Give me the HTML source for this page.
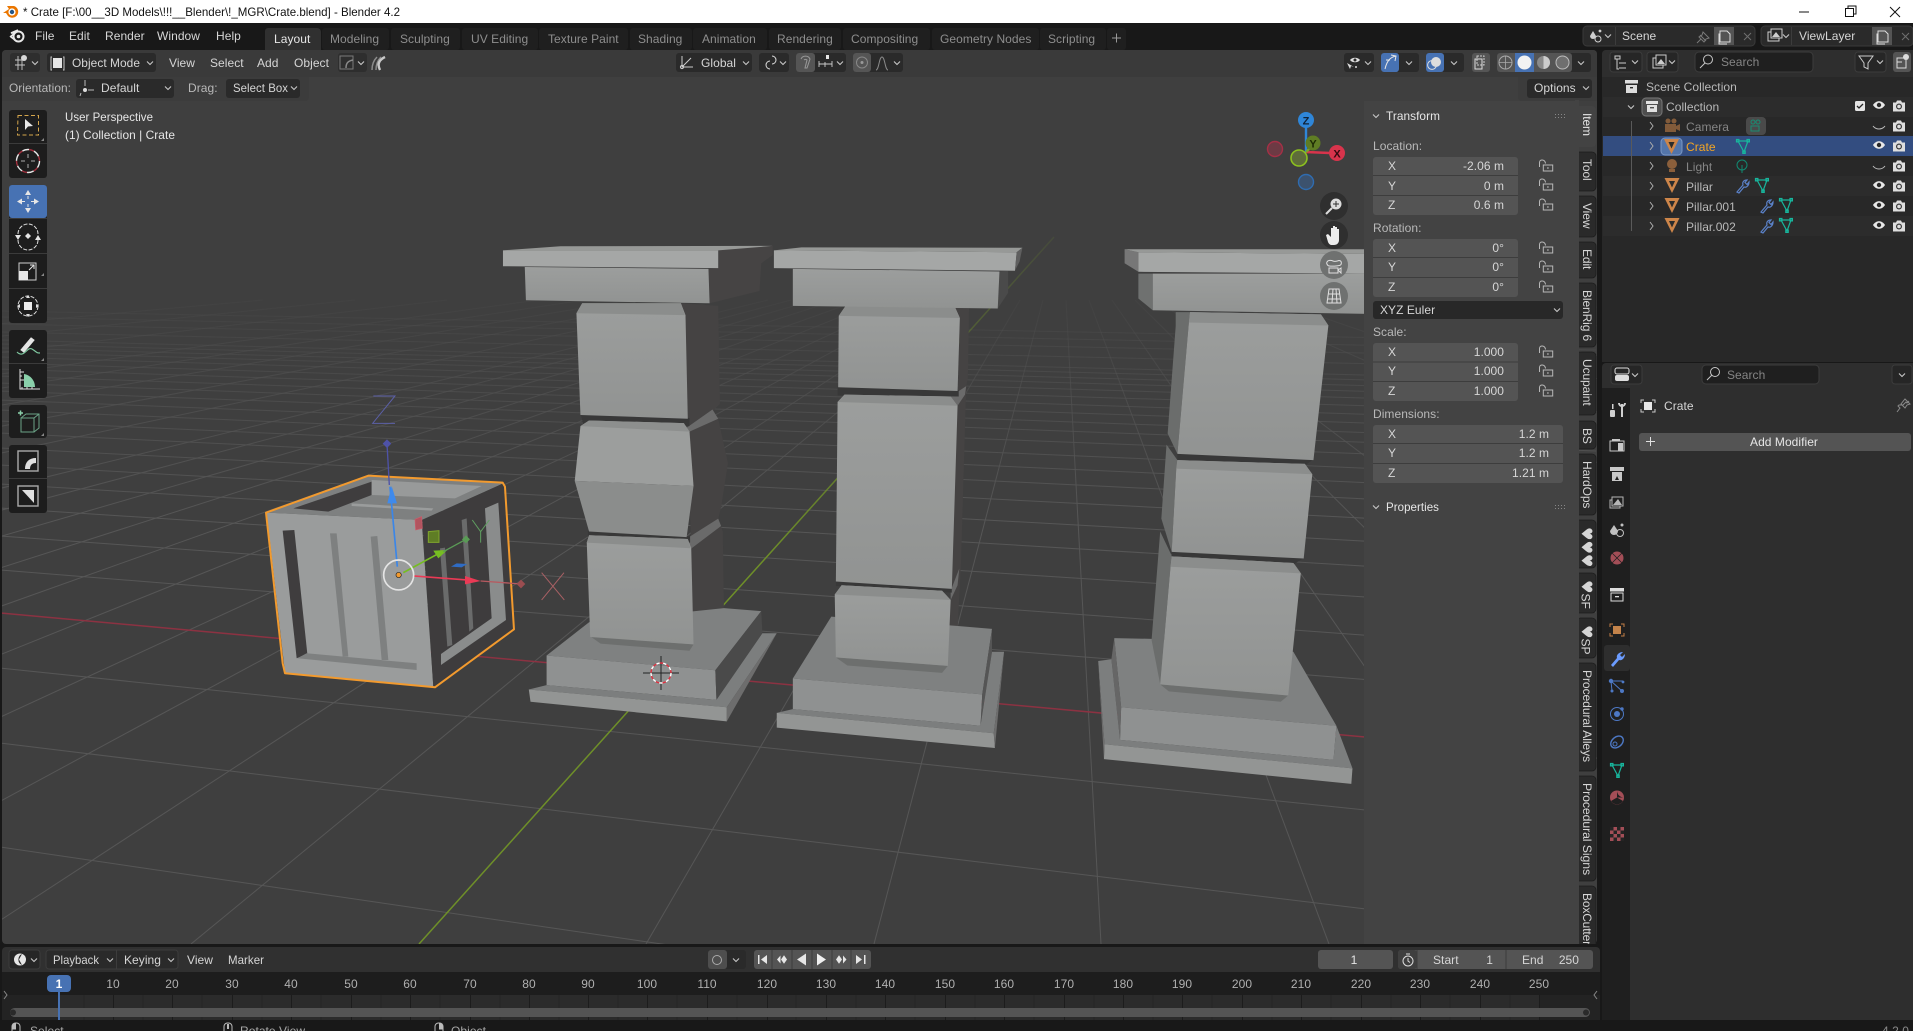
<!DOCTYPE html>
<html><head><meta charset="utf-8"><title>Blender</title>
<style>
html,body{margin:0;padding:0;background:#181818;width:1913px;height:1031px;overflow:hidden}
svg{display:block}
text{font-family:"Liberation Sans","DejaVu Sans",sans-serif;font-size:12px;fill:#d6d6d6;letter-spacing:.05px}
.t{fill:#8e8e8e}.h{fill:#b9b9b9}.dim{fill:#858585}.w{fill:#e6e6e6}
.r{text-anchor:end}.c{text-anchor:middle}
.f{fill:#545454}.dd{fill:#282828}.ln{fill:none;stroke:#cfcfcf;stroke-width:1}
.g{fill:#1d1d1d}
.v{letter-spacing:-.1px}
.hrt{font-size:15px;letter-spacing:0;font-family:"DejaVu Sans",sans-serif}
</style></head><body>
<svg xmlns="http://www.w3.org/2000/svg" width="1913" height="1031" viewBox="0 0 1913 1031">
<defs>
<linearGradient id="gf" gradientUnits="userSpaceOnUse" x1="0" y1="270" x2="0" y2="520"><stop offset="0" stop-color="#505050" stop-opacity="0"/><stop offset=".5" stop-color="#505050" stop-opacity=".75"/><stop offset="1" stop-color="#565656"/></linearGradient>
<linearGradient id="ga" gradientUnits="userSpaceOnUse" x1="0" y1="240" x2="0" y2="560"><stop offset="0" stop-color="#6e8f28" stop-opacity=".15"/><stop offset="1" stop-color="#6e8f28"/></linearGradient>
<linearGradient id="st" x1="0" y1="0" x2="0" y2="1"><stop offset="0" stop-color="#9c9e9d"/><stop offset="1" stop-color="#919392"/></linearGradient>
<g id="chev"><polyline points="-3,-1.5 0,1.5 3,-1.5" fill="none" stroke="#c8c8c8" stroke-width="1.1"/></g>
<g id="lock"><path d="M-6.500 2V-2.500C-6.500-6-1-6-.5-1.500" fill="none" stroke="#b8b8b8"/><rect x="-2.700" y="0" width="9.400" height="6" fill="none" stroke="#b8b8b8"/><rect x="1.200" y="2.300" width="1.400" height="1.400" fill="#b8b8b8"/></g>
<g id="eye"><path d="M-6 0C-3-5 3-5 6 0C3 5-3 5-6 0Z" fill="#e8e8e8"/><circle r="2.2" fill="#2a2a2a"/></g>
<g id="eyeh"><path d="M-6-1C-3 3 3 3 6-1" fill="none" stroke="#bdbdbd"/></g>
<g id="cam"><path d="M-6-3.5h3l1-2h4l1 2h3v9h-12z" fill="#dedede"/><circle cy=".5" r="3" fill="#3a3a3a"/><circle cy=".5" r="1.8" fill="#dedede"/></g>
<g id="obj"><path d="M-7.500-7H7.500L0 8Z" fill="#cd8549"/><path d="M-3-4H3L0 2.500Z" fill="#2b2b2b"/></g>
<g id="mesh" fill="none" stroke-width="1.2"><path d="M-5-5H5L1 6Z"/><rect x="-6.5" y="-6.5" width="2.4" height="2.4"/><rect x="4" y="-6.5" width="2.4" height="2.4"/><rect x="-.2" y="5" width="2.4" height="2.4"/></g>
<g id="wr"><path d="M-5 6L1-1C0-4 2-6 5-6L3-3.5 5-1.5 7-4C7-1 5 2 2 1L-3 7Z" fill="none" stroke="#5b82c9" stroke-width="1.2"/></g>
<g id="dots" fill="#888"><rect width="1" height="1" x="0" y="0"/><rect width="1" height="1" x="3" y="0"/><rect width="1" height="1" x="6" y="0"/><rect width="1" height="1" x="9" y="0"/><rect width="1" height="1" x="0" y="3"/><rect width="1" height="1" x="3" y="3"/><rect width="1" height="1" x="6" y="3"/><rect width="1" height="1" x="9" y="3"/></g>
<clipPath id="vp"><rect x="2" y="50" width="1595" height="894" rx="4"/></clipPath>
<clipPath id="bot"><rect x="0" y="1020" width="1913" height="11"/></clipPath>
<clipPath id="tabs"><rect x="1575" y="100" width="24" height="844"/></clipPath>
</defs>

<!-- title bar -->
<rect width="1913" height="23" fill="#fff"/>
<g transform="translate(11,12)"><path d="M-8 1L-2-3L-4-6L3-6A6 6 0 1 1-3 4L-5 1Z" fill="#ea7600"/><circle cx="1" cy="0" r="3.6" fill="#fff"/><circle cx="1" cy="0" r="2.2" fill="#265787"/></g>
<text x="23" y="16" textLength="377" lengthAdjust="spacingAndGlyphs" style="fill:#111;letter-spacing:0">* Crate [F:\00__3D Models\!!!__Blender\!_MGR\Crate.blend] - Blender 4.2</text>
<rect x="1799" y="11.5" width="10" height="1" fill="#111"/>
<rect x="1845.5" y="8.5" width="8" height="8" fill="none" stroke="#111"/><path d="M1848 8V6h8v8h-2" fill="none" stroke="#111"/>
<path d="M1890 7l10 10M1900 7l-10 10" stroke="#111" fill="none"/>

<!-- top bar -->
<rect y="23" width="1913" height="1008" fill="#181818"/>
<g transform="translate(17,36)"><circle cx="1.5" cy=".5" r="5" fill="none" stroke="#e8e8e8" stroke-width="2"/><circle cx="1.5" cy=".5" r="1.8" fill="#e8e8e8"/><path d="M-7 1L-2-3H-6L1-6M-2 4L-6 1" fill="none" stroke="#e8e8e8" stroke-width="1.6"/></g>
<text x="35" y="40">File</text><text x="69" y="40">Edit</text><text x="105" y="40">Render</text><text x="157" y="40">Window</text><text x="216" y="40">Help</text>
<path d="M268 28h49a4 4 0 0 1 4 4v18h-56v-19a3 3 0 0 1 3-3z" fill="#303030"/>
<g fill="#1f1f1f"><rect x="322" y="28" width="67" height="22" rx="3"/><rect x="391" y="28" width="69" height="22" rx="3"/><rect x="462" y="28" width="76" height="22" rx="3"/><rect x="539" y="28" width="89" height="22" rx="3"/><rect x="630" y="28" width="62" height="22" rx="3"/><rect x="693" y="28" width="74" height="22" rx="3"/><rect x="769" y="28" width="72" height="22" rx="3"/><rect x="843" y="28" width="87" height="22" rx="3"/><rect x="932" y="28" width="107" height="22" rx="3"/><rect x="1040" y="28" width="66" height="22" rx="3"/><rect x="1107" y="28" width="19" height="22" rx="3"/></g>
<text x="274" y="43" class="w">Layout</text><text x="330" y="43" class="t">Modeling</text><text x="400" y="43" class="t">Sculpting</text><text x="471" y="43" class="t">UV Editing</text><text x="548" y="43" class="t">Texture Paint</text><text x="638" y="43" class="t">Shading</text><text x="702" y="43" class="t">Animation</text><text x="777" y="43" class="t">Rendering</text><text x="851" y="43" class="t">Compositing</text><text x="940" y="43" class="t">Geometry Nodes</text><text x="1048" y="43" class="t">Scripting</text>
<path d="M1112 38h9M1116.5 33.5v9" stroke="#9a9a9a" fill="none"/>

<!-- scene / viewlayer -->
<rect x="1583" y="26" width="172" height="20" rx="4" fill="#2a2a2a" stroke="#3a3a3a"/>
<rect x="1615" y="27" width="1" height="18" fill="#3c3c3c"/>
<path d="M1593 31l3 5a3 3 0 1 1-6 0z" fill="#cfcfcf"/><circle cx="1598" cy="39" r="3" fill="none" stroke="#cfcfcf"/><circle cx="1600" cy="31" r="1.4" fill="#cfcfcf"/><use href="#chev" x="1608" y="36"/>
<text x="1622" y="40">Scene</text>
<path d="M1697 43l4-4M1700 35l6 6M1703 32l6 6-3 1-2 3-5-5 3-2z" fill="none" stroke="#7a7a7a"/>
<rect x="1714" y="27" width="20" height="18" fill="#545454"/><path d="M1720 31h7l3 3v8h-10zM1720 34h-1v10h8" fill="none" stroke="#ddd"/>
<path d="M1744 33l7 7M1751 33l-7 7" stroke="#6f6f6f"/>
<rect x="1761" y="26" width="152" height="20" rx="4" fill="#2a2a2a" stroke="#3a3a3a"/>
<rect x="1791" y="27" width="1" height="18" fill="#3c3c3c"/>
<rect x="1768" y="32" width="11" height="9" fill="none" stroke="#cfcfcf"/><rect x="1771" y="29" width="11" height="9" fill="#2a2a2a" stroke="#cfcfcf"/><path d="M1772 37l4-5 4 5z" fill="#cfcfcf"/><use href="#chev" x="1786" y="36"/>
<text x="1799" y="40">ViewLayer</text>
<rect x="1872" y="27" width="20" height="18" fill="#545454"/><path d="M1878 31h7l3 3v8h-10zM1878 34h-1v10h8" fill="none" stroke="#ddd"/>
<path d="M1902 33l7 7M1909 33l-7 7" stroke="#6f6f6f"/>

<!-- VIEWPORT -->
<rect x="2" y="50" width="1595" height="894" rx="4" fill="#3f3f3f"/>
<g clip-path="url(#vp)">
<g stroke="url(#gf)" stroke-width="1" fill="none">
<path d="M0 847L1596 1081M0 743L1596 937M0 668L1596 834M0 570L1596 698M0 536L1596 652M0 508L1596 612M0 484L1596 580M0 465L1596 554M0 448L1596 530M0 433L1596 510M0 421L1596 493M0 410L1596 478M0 400L1596 463M0 391L1596 451M0 383L1596 441M0 376L1596 431M0 369L1596 422M0 363L1596 413M0 357L1596 405M0 352L1596 398M0 348L1596 392M0 344L1596 386M0 340L1596 381M0 332L1596 369M0 324L1596 358M0 317L1596 350M0 311L1596 342"/>
<path d="M191 944L974 300M-36 944L951 300M-264 944L928 300M-492 944L905 300M-719 944L882 300M-947 944L860 300M-1174 944L837 300M-1402 944L814 300M-1629 944L791 300M-1857 944L768 300M-2312 944L722 300M-2767 944L676 300M-3222 944L630 300M-3677 944L584 300M-4132 944L538 300M-5042 944L447 300M-5953 944L355 300M-6863 944L263 300"/>
<path d="M646 944L1020 300M874 944L1043 300M1101 944L1066 300M1329 944L1089 300M1556 944L1112 300M1784 944L1135 300M2012 944L1158 300M2694 944L1227 300M3149 944L1272 300M3604 944L1318 300M4060 944L1364 300M4515 944L1410 300M4970 944L1456 300M5880 944L1548 300"/>
</g>
<path d="M0 613L1596 758" stroke="#8c3242" stroke-width="1.5" fill="none"/>
<path d="M419 944L1054 237" stroke="url(#ga)" stroke-width="1.5" fill="none"/>

<!-- PILLARS -->
<g transform="translate(480 230) scale(.574 .37)">
<!-- pillar 1 -->
<polygon points="415,55 510,43 510,68 490,90 487,165 400,198 398,105 415,103" fill="#464444"/>
<polygon points="350,198 415,205 418,470 405,490 415,510 432,630 420,750 415,780 423,815 425,1030 372,1125 362,512 357,230" fill="#454343"/>
<polygon points="355,540 405,485 415,510 365,545" fill="#6b6b6b"/><polygon points="362,832 415,780 420,800 367,862" fill="#6a6a6a"/>
<polygon points="116,1150 190,1060 425,1022 490,1030 410,1190" fill="#7f8181"/>
<polygon points="116,1150 410,1190 412,1270 116,1230" fill="#8f9191"/>
<polygon points="410,1190 490,1030 492,1090 412,1270" fill="#4a4a4a"/>
<polygon points="85,1242 116,1230 412,1270 492,1090 517,1090 430,1290" fill="#7c7e7e"/>
<polygon points="85,1242 430,1290 430,1328 88,1275" fill="#939594"/>
<polygon points="430,1290 517,1090 430,1328" fill="#6d6d6d"/>
<polygon points="192,1098 372,1120 365,1137 210,1118" fill="#6d6f6e"/>
<polygon points="175,495 365,508 365,530 180,525" fill="#383838"/><polygon points="188,812 366,828 366,845 188,830" fill="#383838"/>
<polygon points="178,198 350,198 358,230 362,510 175,500 168,225" fill="url(#st)"/><polygon points="178,198 350,198 357,230 168,225" fill="#8b8d8c"/>
<polygon points="190,515 355,522 365,545 372,692 165,678 175,530" fill="#9c9e9d"/><polygon points="165,678 372,692 360,830 190,815" fill="#8b8d8c"/><polygon points="190,515 355,522 365,545 175,530" fill="#8d8f8e"/>
<polygon points="190,825 362,835 368,860 372,1120 192,1100 186,845" fill="url(#st)"/><polygon points="190,825 362,835 367,860 186,845" fill="#8b8d8c"/>
<polygon points="78,100 398,105 400,198 80,190" fill="url(#st)"/>
<polygon points="40,55 415,55 415,103 40,98" fill="#a5a7a6"/><polygon points="40,55 140,44 510,43 415,55" fill="#979997"/>
<!-- pillar 2 -->
<polygon points="905,112 920,110 920,170 902,212" fill="#4a4a4a"/>
<polygon points="828,210 852,212 850,400 847,422 838,900 832,1080 815,1178 832,475 836,238" fill="#454343"/>
<polygon points="820,450 847,422 845,445 832,475" fill="#6b6b6b"/><polygon points="820,975 835,915 832,960 820,1000" fill="#6b6b6b"/>
<polygon points="545,1212 612,1045 830,1070 892,1078 875,1255" fill="#7f8181"/>
<polygon points="545,1212 875,1255 872,1340 545,1295" fill="#8f9191"/>
<polygon points="875,1255 892,1078 892,1140 872,1340" fill="#555"/>
<polygon points="517,1305 545,1295 872,1340 892,1140 913,1140 895,1360" fill="#7c7e7e"/>
<polygon points="517,1305 895,1360 897,1400 517,1345" fill="#939594"/>
<polygon points="895,1360 913,1140 897,1400" fill="#6d6d6d"/>
<polygon points="620,1155 815,1178 805,1197 640,1177" fill="#6d6f6e"/>
<polygon points="623,423 834,433 834,450 623,447" fill="#383838"/><polygon points="620,948 822,968 822,980 620,962" fill="#383838"/>
<polygon points="637,205 828,210 836,238 832,435 624,425 625,232" fill="url(#st)"/><polygon points="637,205 828,210 836,238 625,232" fill="#8b8d8c"/>
<polygon points="635,445 820,450 832,475 822,970 620,950 623,465" fill="url(#st)"/><polygon points="635,445 820,450 832,475 623,465" fill="#8b8d8c"/>
<polygon points="630,960 805,975 820,1000 815,1178 620,1155 618,985" fill="url(#st)"/><polygon points="630,960 805,975 820,1000 618,985" fill="#8b8d8c"/>
<polygon points="545,105 905,112 902,212 545,205" fill="url(#st)"/>
<polygon points="512,55 935,60 932,110 512,103" fill="#a5a7a6"/><polygon points="512,55 560,47 945,48 935,60" fill="#979997"/><polygon points="935,60 945,48 940,85 932,110" fill="#5f5f5f"/>
<!-- pillar 3 -->
<polygon points="1105,1103 1170,1105 1417,1140 1492,1340 1117,1290" fill="#7f8181"/>
<polygon points="1117,1290 1492,1340 1487,1432 1115,1378" fill="#8f9191"/>
<polygon points="1105,1103 1117,1290 1115,1378 1100,1160" fill="#666"/>
<polygon points="1077,1165 1100,1160 1115,1378 1487,1432 1492,1340 1520,1455 1088,1390" fill="#7c7e7e"/>
<polygon points="1088,1390 1520,1455 1518,1497 1087,1430" fill="#939594"/>
<polygon points="1077,1165 1088,1390 1087,1430" fill="#6d6d6d"/>
<polygon points="1185,1228 1408,1258 1395,1275 1200,1247" fill="#6d6f6e"/>
<polygon points="1212,222 1237,222 1235,250 1215,605 1198,550 1212,260" fill="#6b6d6c"/>
<polygon points="1196,580 1215,622 1213,645 1205,870 1187,780" fill="#6b6d6c"/>
<polygon points="1185,815 1205,880 1203,910 1185,1228 1170,1108" fill="#6b6d6c"/>
<polygon points="1215,603 1452,620 1437,636 1215,622" fill="#383838"/><polygon points="1205,868 1435,886 1417,904 1205,884" fill="#383838"/>
<polygon points="1237,222 1465,228 1478,258 1452,622 1215,605 1235,250" fill="url(#st)"/><polygon points="1237,222 1465,228 1478,258 1235,250" fill="#8b8d8c"/>
<polygon points="1215,622 1437,632 1450,660 1435,888 1205,870 1213,645" fill="url(#st)"/><polygon points="1215,622 1437,632 1450,660 1213,645" fill="#8b8d8c"/>
<polygon points="1205,882 1417,900 1430,928 1408,1258 1185,1228 1203,910" fill="url(#st)"/><polygon points="1205,882 1417,900 1430,928 1203,910" fill="#8b8d8c"/>
<polygon points="1147,118 1172,118 1172,217 1147,185" fill="#6f7170"/>
<polygon points="1172,118 1560,118 1560,227 1172,217" fill="url(#st)"/>
<polygon points="1123,52 1147,60 1147,113 1123,90" fill="#777"/>
<polygon points="1147,60 1560,65 1560,118 1147,113" fill="#a5a7a6"/><polygon points="1123,52 1560,52 1560,65 1147,60" fill="#979997"/>
</g>

<!-- 3D cursor -->
<g transform="translate(661,673)" fill="none"><path d="M0-17V17M-18 0H18" stroke="#222" stroke-width="1"/><circle r="10" stroke="#fff" stroke-width="1.4" stroke-dasharray="3.5 3.5"/><circle r="10" stroke="#e03040" stroke-width="1.4" stroke-dasharray="3.5 3.5" stroke-dashoffset="3.5"/></g>

<!-- CRATE -->
<g transform="translate(240 380) scale(.3333)">
<polygon points="80,398 385,287 790,310 545,420" fill="#7e8080"/>
<polygon points="160,385 395,305 395,345 265,395" fill="#3f3d3e"/>
<polygon points="395,300 725,318 645,355 395,345" fill="#989a9a"/>
<polygon points="335,370 580,385 575,392 335,378" fill="#9a9c9c"/>
<polygon points="80,398 545,420 580,920 135,878" fill="#9a9c9c"/>
<polygon points="548,420 790,310 822,748 580,920" fill="#3e3c3d"/>
<polygon points="735,385 775,368 798,720 603,855 603,822 755,715" fill="#8a8c8c"/>
<polygon points="600,505 615,503 637,795 622,800" fill="#6a6b6b"/><polygon points="665,420 680,415 700,745 688,755" fill="#6a6b6b"/>
<polygon points="128,452 163,450 202,822 170,835" fill="#3f3d3e"/>
<polygon points="270,460 290,460 325,830 308,830" fill="#7e8080"/><polygon points="392,470 412,468 445,840 425,840" fill="#7e8080"/>
<polygon points="200,820 530,850 530,870 172,835" fill="#7e8080"/>
<path d="M78 398L385 287L788 308L795 320L822 748L585 922L135 880L128 850Z" fill="none" stroke="#f29a2e" stroke-width="6" stroke-linejoin="round"/>
<!-- gizmo -->
<path d="M472 560L450 320" stroke="#3b86e8" stroke-width="5" fill="none"/><path d="M448 315L441 190" stroke="#4e52a8" stroke-width="4" fill="none"/>
<polygon points="442,370 471,370 455,318" fill="#3f8aec"/><polygon points="441,178 454,191 441,204 428,191" fill="#4e52a8"/>
<path d="M400 48H465L398 130H465" stroke="#5c60a8" stroke-width="3" fill="none"/>
<path d="M490 578L597 520" stroke="#76bd22" stroke-width="5" fill="none"/><polygon points="580,512 622,510 595,535" fill="#76bd22"/><path d="M610 515L678 478" stroke="#5a9b56" stroke-width="4" fill="none"/><polygon points="678,466 690,478 678,490 666,478" fill="#5a9b56"/>
<path d="M697 420L722 455L748 420M722 455V488" stroke="#5f9f60" stroke-width="3" fill="none"/>
<path d="M520 588L680 600" stroke="#ea3a55" stroke-width="5" fill="none"/><polygon points="675,588 722,603 675,613" fill="#ea3a55"/><path d="M722 603L843 612" stroke="#b75a60" stroke-width="4" fill="none"/><polygon points="843,599 856,612 843,625 830,612" fill="#9b4d50"/>
<path d="M905 578L973 660M972 578L905 660" stroke="#a86064" stroke-width="3" fill="none"/>
<polygon points="525,418 545,410 547,445 527,450" fill="#b2545f" stroke="#c95c6b" stroke-width="2"/>
<polygon points="565,455 597,452 597,487 565,487" fill="#5f7d25" stroke="#80a62d" stroke-width="3"/>
<polygon points="633,560 650,550 682,552 665,562" fill="#2f6cc4"/>
<circle cx="476" cy="585" r="45" fill="none" stroke="#e4e4e4" stroke-width="5"/><circle cx="476" cy="585" r="8" fill="#f29a2e" stroke="#222" stroke-width="2"/>
</g>

<!-- overlay text -->
<text x="65" y="121" class="w" textLength="88" lengthAdjust="spacingAndGlyphs">User Perspective</text><text x="65" y="139" class="w" textLength="110" lengthAdjust="spacingAndGlyphs">(1) Collection | Crate</text>

<!-- viewport gizmo -->
<path d="M1306 153V125" stroke="#2f86d8" stroke-width="2.4"/><path d="M1306 152L1330 153" stroke="#d8344c" stroke-width="2.4"/><path d="M1306 152L1311 147" stroke="#7aa32a" stroke-width="2.4"/>
<circle cx="1275" cy="149" r="7.5" fill="#6d3a44" stroke="#a53046" stroke-width="1.4"/>
<circle cx="1313" cy="143" r="7.5" fill="#5f7d24"/><text x="1313" y="147.5" class="c" style="fill:#1d2b05;font-weight:700;font-size:11px;letter-spacing:0">Y</text>
<circle cx="1299" cy="158" r="8" fill="#5e6c3a" stroke="#8cc11f" stroke-width="1.6"/>
<circle cx="1306" cy="182" r="7.5" fill="#3c526e" stroke="#2f6cb0" stroke-width="1.4"/>
<circle cx="1306" cy="120" r="8" fill="#2f86d8"/><text x="1306" y="124.5" class="c" style="fill:#0f2238;font-weight:700;font-size:11px;letter-spacing:0">Z</text>
<circle cx="1337" cy="153" r="8" fill="#d8344c"/><text x="1337" y="157.5" class="c" style="fill:#33090f;font-weight:700;font-size:11px;letter-spacing:0">X</text>
<circle cx="1334" cy="206" r="14" fill="#2f2f2f"/><circle cx="1336" cy="204" r="5.5" fill="#dcdcdc"/><path d="M1332 208l-6 6" stroke="#dcdcdc" stroke-width="2"/><path d="M1333 204h6M1336 201v6" stroke="#2f2f2f"/>
<circle cx="1334" cy="235" r="14" fill="#2f2f2f"/><path d="M1326 235l2-1 3 3v-9h2v6-8h2v8-7h2v8-6h2v11c0 3-2 5-5 5h-2c-2 0-3-1-4-3z" fill="#ececec"/>
<circle cx="1334" cy="265" r="14" fill="#6f7170"/><path d="M1327 262c1-2 4-2 6-1s4 0 6-.5c2 0 3 2 2 4s-12 2-13 1-2-2-1-3.500z" fill="none" stroke="#e0e0e0"/><rect x="1329" y="268" width="9" height="5" fill="none" stroke="#e0e0e0"/><path d="M1338 270l3-2v5z" fill="none" stroke="#e0e0e0"/>
<circle cx="1334" cy="296" r="14" fill="#6f7170"/><path d="M1329 289h10l2 14h-14zM1328 294h12M1327.5 299h13M1333 289l-1 14M1336 289l1 14" fill="none" stroke="#e0e0e0"/>
</g>

<!-- viewport header -->
<path d="M6 50H1593a4 4 0 0 1 4 4V77H2V54a4 4 0 0 1 4-4z" fill="#3a3a3a"/>
<path d="M2 77H309V97a4 4 0 0 1-4 4H2z" fill="#3c3c3c"/>
<path d="M1518 77H1597V101H1522a4 4 0 0 1-4-4z" fill="#3c3c3c"/>
<rect x="10" y="53" width="30" height="19" rx="3" fill="#2e2e2e"/><path d="M15 65h10M15 60h10M18 56v14M22 56v14" stroke="#c8c8c8" stroke-width=".9"/><circle cx="24" cy="58" r="3" fill="#d8d8d8"/><use href="#chev" x="35" y="63"/>
<rect x="47" y="53" width="109" height="19" rx="3" fill="#2a2a2a"/>
<path d="M52 57h-1v13h1M63 57h1v13h-1" fill="none" stroke="#c8c8c8"/><rect x="53" y="58" width="9" height="10" fill="#e6e6e6"/>
<text x="72" y="67" textLength="68" lengthAdjust="spacingAndGlyphs">Object Mode</text><use href="#chev" x="150" y="63"/>
<text x="169" y="67">View</text><text x="210" y="67">Select</text><text x="257" y="67">Add</text><text x="294" y="67">Object</text>
<rect x="338" y="53" width="29" height="19" rx="3" fill="#2e2e2e"/><path d="M340 56h13v13h-13z" fill="none" stroke="#7a7a7a"/><path d="M346 68c0-5 2-7 7-8" fill="none" stroke="#8a8a8a" stroke-width="1.5"/><use href="#chev" x="361" y="63"/>
<path d="M372 70c0-6 2-10 5-13M376 70c0-6 2-10 5-13" fill="none" stroke="#8c8c8c" stroke-width="1.5"/><path d="M380 70c-3-6-1-10 5-13" fill="none" stroke="#c8c8c8" stroke-width="2.4"/>

<text x="9" y="92" class="h" textLength="62" lengthAdjust="spacingAndGlyphs">Orientation:</text>
<rect x="76" y="79" width="98" height="19" rx="3" fill="#2a2a2a"/><circle cx="85" cy="90" r="2" fill="#ddd"/><path d="M85 86v-6M88 90h6M81 93l-1 3" stroke="#bbb" fill="none"/><text x="101" y="92">Default</text><use href="#chev" x="168" y="88"/>
<text x="188" y="92" class="h">Drag:</text>
<rect x="226" y="79" width="74" height="19" rx="3" fill="#2a2a2a"/><text x="233" y="92" textLength="55" lengthAdjust="spacingAndGlyphs">Select Box</text><use href="#chev" x="294" y="88"/>

<rect x="676" y="53" width="76" height="19" rx="3" fill="#2a2a2a"/><path d="M682 56v11h11M682 67l9-9" fill="none" stroke="#ccc"/><circle cx="682" cy="67" r="1.6" fill="none" stroke="#ccc"/><text x="701" y="67">Global</text><use href="#chev" x="746" y="63"/>
<rect x="759" y="53" width="30" height="19" rx="3" fill="#2a2a2a"/><path d="M772 56a4 4 0 1 1 0 8M770 69a4 4 0 1 1 0-8" fill="none" stroke="#ddd"/><use href="#chev" x="783" y="63"/>
<rect x="796" y="53" width="50" height="19" rx="3" fill="#2a2a2a"/><rect x="796" y="53" width="19" height="19" rx="3" fill="#555"/><path d="M801 59a5 5 0 0 1 9 0l-3 9h-2l2-8a2 2 0 0 0-3 0" fill="none" stroke="#999"/><rect x="826" y="55" width="3" height="4" fill="#e6e6e6"/><path d="M819 64h13M819 61v6M825 62v5M832 61v6" stroke="#ccc" stroke-width=".9"/><use href="#chev" x="840" y="63"/>
<rect x="853" y="53" width="50" height="19" rx="3" fill="#2a2a2a"/><rect x="853" y="53" width="18" height="19" rx="3" fill="#555"/><circle cx="862" cy="62.5" r="5.5" fill="none" stroke="#888"/><circle cx="862" cy="62.5" r="1.5" fill="#999"/><path d="M876 70c3 0 3-13 6-13s3 13 6 13" fill="none" stroke="#8a8a8a"/><use href="#chev" x="897" y="63"/>

<rect x="1344" y="53" width="30" height="19" rx="3" fill="#2a2a2a"/><path d="M1350 60c2-3 8-3 10 0c-2 3-8 3-10 0z" fill="#e0e0e0"/><circle cx="1355" cy="60" r="1.500" fill="#2a2a2a"/><path d="M1347 63l3 6 1-3 3 1z" fill="#ddd"/><circle cx="1356" cy="67" r="1" fill="#ddd"/><use href="#chev" x="1368" y="63"/>
<rect x="1381" y="53" width="38" height="19" rx="3" fill="#2a2a2a"/><rect x="1381" y="53" width="18" height="19" rx="3" fill="#4772b3"/><path d="M1385 69c2-9 6-12 11-13M1391 55l5 1-1 5M1386 60h4" fill="none" stroke="#e6e6e6"/><use href="#chev" x="1409" y="63"/>
<rect x="1426" y="53" width="38" height="19" rx="3" fill="#2a2a2a"/><rect x="1426" y="53" width="18" height="19" rx="3" fill="#4772b3"/><circle cx="1436" cy="62" r="5" fill="#ddd"/><circle cx="1432" cy="65" r="4.4" fill="none" stroke="#ddd"/><use href="#chev" x="1454" y="63"/>
<rect x="1472" y="53" width="18" height="19" rx="3" fill="#555"/><path d="M1477 56h7v9h-7z" fill="none" stroke="#ccc" stroke-dasharray="2 1"/><path d="M1475 59h7v10h-7z" fill="none" stroke="#ddd"/>
<rect x="1497" y="53" width="94" height="19" rx="3" fill="#2a2a2a"/><rect x="1497" y="53" width="75" height="19" rx="3" fill="#555"/><rect x="1515" y="53" width="19" height="19" fill="#4772b3"/>
<circle cx="1505.5" cy="62.5" r="6.5" fill="none" stroke="#aaa"/><path d="M1499 62.5h13M1505.5 56v13" stroke="#aaa" stroke-width=".8"/><circle cx="1524.5" cy="62.5" r="7" fill="#f2f2f2"/><circle cx="1543.5" cy="62.5" r="6.5" fill="#8a8a8a"/><path d="M1543.5 56a6.5 6.5 0 0 1 0 13z" fill="#ccc"/><circle cx="1562.5" cy="62.5" r="6.5" fill="#6f6f6f" stroke="#bbb"/><use href="#chev" x="1581" y="63"/>
<rect x="1527" y="79" width="65" height="19" rx="3" fill="#2a2a2a"/><text x="1534" y="92">Options</text><use href="#chev" x="1586" y="88"/>

<!-- left toolbar -->
<rect x="9" y="110" width="38" height="68" rx="3" class="g"/><rect x="9" y="185" width="38" height="138" rx="3" class="g"/><rect x="9" y="330" width="38" height="68" rx="3" class="g"/><rect x="9" y="405" width="38" height="33" rx="3" class="g"/><rect x="9" y="445" width="38" height="68" rx="3" class="g"/>
<path d="M9 143.5h38M9 218.5h38M9 253.5h38M9 288.5h38M9 363.5h38M9 478.5h38" stroke="#3b3b3b"/>
<path d="M18 115.500h20.500v19.500h-21z" fill="none" stroke="#d5a64c" stroke-dasharray="4 2.500"/><path d="M25 119l8 7-5 .5-3 3.500z" fill="#e8e8e8"/>
<path d="M44 141v-3l-3 3z" fill="#888"/><path d="M44 276v-3l-3 3zM44 361v-3l-3 3zM44 436v-3l-3 3z" fill="#888"/>
<circle cx="28" cy="161" r="11.500" fill="none" stroke="#e8e8e8" stroke-width="1.400" stroke-dasharray="7 5"/><circle cx="28" cy="161" r="11.500" fill="none" stroke="#a5303e" stroke-width="1.400" stroke-dasharray="5 7" stroke-dashoffset="-7"/><path d="M28 154v4M28 164v4M21 161h4M31 161h4" stroke="#aaa"/>
<rect x="9" y="185" width="38" height="33" rx="3" fill="#4772b3"/><path d="M28 190l-3 5h6zM28 213l-3-5h6zM17 201.500l5-3v6zM39 201.500l-5-3v6z" fill="#e6e6e6"/><path d="M28 196v3M28 204v3M22 201.500h3M31 201.500h3" stroke="#e6e6e6"/>
<path d="M18 234a10 10 0 0 1 20 0M38 240a10 10 0 0 1-20 0" fill="none" stroke="#e0e0e0" stroke-dasharray="4 1.500"/><path d="M28 233l3 3-3 3-3-3z" fill="#e6e6e6"/><path d="M15 235h6l-3 5zM35 240l3-5 3 5z" fill="#e6e6e6"/>
<rect x="19" y="263" width="17" height="17" fill="none" stroke="#cfcfcf"/><rect x="19" y="271" width="9" height="9" fill="#e6e6e6"/><path d="M29 270l5-5M30 265h4v4" fill="none" stroke="#e6e6e6"/>
<circle cx="28" cy="306" r="10" fill="none" stroke="#ddd" stroke-dasharray="4 1.500"/><rect x="24" y="302" width="8" height="8" fill="#ececec"/><path d="M28 295l-2 3h4zM28 317l-2-3h4zM17 306l3-2v4zM39 306l-3-2v4z" fill="#ddd"/>
<path d="M20 350l11-13 4 3-11 13z" fill="#e6e6e6" stroke="#2a2a2a" stroke-width=".5"/><path d="M17 352c7 7 10-6 15-3s4 4 8 4" fill="none" stroke="#7fc8a0" stroke-width="1.200"/>
<path d="M20 369v20h20M20 372h4M20 376h2M20 380h4M22 389v-2M27 389v-2M32 389v-2" stroke="#e0e0e0" fill="none"/><path d="M24 387v-13a13 13 0 0 1 11 13z" fill="#8ad0aa"/>
<path d="M18 413h5M20.500 410.500v5" stroke="#8ad0aa" stroke-width="1.500"/><path d="M21 418h13v14h-13zM21 418l5-4h13v14l-5 4M34 418l5-4" fill="none" stroke="#6ba387"/>
<rect x="18" y="451" width="20" height="20" fill="none" stroke="#aaa" stroke-width="1.400"/><path d="M25 469c0-7 4-11 11-11v5c-4 0-6 2-6 6z" fill="#e0e0e0"/>
<rect x="18" y="486" width="20" height="20" fill="none" stroke="#aaa" stroke-width="1.400"/><path d="M22 490h12v13z" fill="#e0e0e0"/>

<!-- N panel -->
<rect x="1364" y="101" width="215" height="843" fill="#434343"/>
<use href="#chev" x="1376" y="116"/><text x="1386" y="120" class="w" textLength="54" lengthAdjust="spacingAndGlyphs">Transform</text><use href="#dots" x="1555" y="114"/>
<text x="1373" y="150" class="h">Location:</text><text x="1373" y="232" class="h">Rotation:</text><text x="1373" y="336" class="h">Scale:</text><text x="1373" y="418" class="h">Dimensions:</text>
<rect x="1373" y="157" width="145" height="58" rx="3" class="f"/><rect x="1373" y="239" width="145" height="58" rx="3" class="f"/><rect x="1373" y="343" width="145" height="58" rx="3" class="f"/><rect x="1373" y="425" width="190" height="58" rx="3" class="f"/>
<path d="M1373 175.500h145M1373 195.500h145M1373 257.500h145M1373 277.500h145M1373 362h145M1373 381.500h145M1373 443.500h190M1373 463.500h190" stroke="#3d3d3d"/>
<g class="labs">
<text x="1388" y="170">X</text><text x="1388" y="190">Y</text><text x="1388" y="209">Z</text>
<text x="1388" y="252">X</text><text x="1388" y="271">Y</text><text x="1388" y="291">Z</text>
<text x="1388" y="356">X</text><text x="1388" y="375">Y</text><text x="1388" y="395">Z</text>
<text x="1388" y="438">X</text><text x="1388" y="457">Y</text><text x="1388" y="477">Z</text>
<text x="1504" y="170" class="r">-2.06 m</text><text x="1504" y="190" class="r">0 m</text><text x="1504" y="209" class="r">0.6 m</text>
<text x="1504" y="252" class="r">0°</text><text x="1504" y="271" class="r">0°</text><text x="1504" y="291" class="r">0°</text>
<text x="1504" y="356" class="r">1.000</text><text x="1504" y="375" class="r">1.000</text><text x="1504" y="395" class="r">1.000</text>
<text x="1549" y="438" class="r">1.2 m</text><text x="1549" y="457" class="r">1.2 m</text><text x="1549" y="477" class="r">1.21 m</text>
</g>
<use href="#lock" x="1546" y="165"/><use href="#lock" x="1546" y="184"/><use href="#lock" x="1546" y="204"/>
<use href="#lock" x="1546" y="247"/><use href="#lock" x="1546" y="266"/><use href="#lock" x="1546" y="286"/>
<use href="#lock" x="1546" y="351"/><use href="#lock" x="1546" y="370"/><use href="#lock" x="1546" y="390"/>
<rect x="1373" y="301" width="190" height="18" rx="3" fill="#282828"/><text x="1380" y="314">XYZ Euler</text><use href="#chev" x="1557" y="310"/>
<use href="#chev" x="1376" y="507"/><text x="1386" y="511" class="w" textLength="53" lengthAdjust="spacingAndGlyphs">Properties</text><use href="#dots" x="1555" y="505"/>

<!-- N tabs -->
<g clip-path="url(#tabs)">
<rect x="1572" y="106" width="24" height="41" rx="4" fill="#434343"/>
<g fill="#2a2a2a" stroke="#1d1d1d" stroke-width=".8"><rect x="1572" y="152" width="24" height="39" rx="4"/><rect x="1572" y="196" width="24" height="41" rx="4"/><rect x="1572" y="242" width="24" height="36" rx="4"/><rect x="1572" y="283" width="24" height="64" rx="4"/><rect x="1572" y="352" width="24" height="63" rx="4"/><rect x="1572" y="421" width="24" height="28" rx="4"/><rect x="1572" y="454" width="24" height="61" rx="4"/><rect x="1572" y="520" width="24" height="48" rx="4"/><rect x="1572" y="573" width="24" height="40" rx="4"/><rect x="1572" y="618" width="24" height="40" rx="4"/><rect x="1572" y="663" width="24" height="108" rx="4"/><rect x="1572" y="776" width="24" height="105" rx="4"/><rect x="1572" y="886" width="24" height="70" rx="4"/></g>
<rect x="1572" y="100" width="7" height="850" fill="#434343"/>
<g>
<text transform="translate(1583,113) rotate(90)" class="w v">Item</text>
<text transform="translate(1583,159) rotate(90)" class="v">Tool</text>
<text transform="translate(1583,203) rotate(90)" class="v">View</text>
<text transform="translate(1583,249) rotate(90)" class="v">Edit</text>
<text transform="translate(1583,290) rotate(90)" class="v">BlenRig 6</text>
<text transform="translate(1583,359) rotate(90)" class="v">Ucupaint</text>
<text transform="translate(1583,428) rotate(90)" class="v">BS</text>
<text transform="translate(1583,461) rotate(90)" class="v">HardOps</text>
<text transform="translate(1581.500,527) rotate(90)" class="hrt">♥♥♥</text>
<text transform="translate(1581.500,580) rotate(90)"><tspan class="hrt">♥</tspan>SF</text>
<text transform="translate(1581.500,625) rotate(90)"><tspan class="hrt">♥</tspan>SP</text>
<text transform="translate(1583,670) rotate(90)" class="v" textLength="92" lengthAdjust="spacingAndGlyphs">Procedural Alleys</text>
<text transform="translate(1583,783) rotate(90)" class="v" textLength="92" lengthAdjust="spacingAndGlyphs">Procedural Signs</text>
<text transform="translate(1583,893) rotate(90)" class="v" textLength="52" lengthAdjust="spacingAndGlyphs">BoxCutter</text>
</g>
</g>

<!-- timeline -->
<rect x="2" y="947" width="1598" height="73" rx="4" fill="#1d1d1d"/>
<path d="M6 947H1596a4 4 0 0 1 4 4V972H2V951a4 4 0 0 1 4-4z" fill="#303030"/>
<rect x="59" y="995" width="1480" height="25" fill="#2b2b2b"/>
<rect x="2" y="995" width="57" height="25" fill="#232323"/><rect x="1539" y="995" width="61" height="25" fill="#232323"/>
<g stroke="#1c1c1c"><path d="M113.500 995v25M172.500 995v25M232.500 995v25M291.500 995v25M351.500 995v25M410.500 995v25M470.500 995v25M529.500 995v25M588.500 995v25M647.500 995v25M707.500 995v25M767.500 995v25M826.500 995v25M885.500 995v25M945.500 995v25M1004.500 995v25M1064.500 995v25M1123.500 995v25M1182.500 995v25M1242.500 995v25M1301.500 995v25M1361.500 995v25M1420.500 995v25M1480.500 995v25M1539.500 995v25"/></g>
<g stroke="#252525"><path d="M84 995v25M143 995v25M202 995v25M262 995v25M321 995v25M381 995v25M440 995v25M500 995v25M559 995v25M618 995v25M677 995v25M737 995v25M796 995v25M856 995v25M915 995v25M975 995v25M1034 995v25M1094 995v25M1153 995v25M1212 995v25M1272 995v25M1331 995v25M1391 995v25M1450 995v25M1510 995v25"/></g>
<rect x="10" y="1008" width="1580" height="9" rx="4.500" fill="#545454"/><circle cx="13" cy="1012.500" r="3" fill="#2a2a2a"/><circle cx="1586" cy="1012.500" r="3" fill="#2a2a2a"/>
<path d="M4 991l3 4-3 4" fill="none" stroke="#888"/><path d="M1597 991l-3 4 3 4" fill="none" stroke="#888"/>
<g>
<text x="113" y="988" class="c" style="fill:#b0b0b0">10</text><text x="172" y="988" class="c" style="fill:#b0b0b0">20</text><text x="232" y="988" class="c" style="fill:#b0b0b0">30</text><text x="291" y="988" class="c" style="fill:#b0b0b0">40</text><text x="351" y="988" class="c" style="fill:#b0b0b0">50</text><text x="410" y="988" class="c" style="fill:#b0b0b0">60</text><text x="470" y="988" class="c" style="fill:#b0b0b0">70</text><text x="529" y="988" class="c" style="fill:#b0b0b0">80</text><text x="588" y="988" class="c" style="fill:#b0b0b0">90</text><text x="647" y="988" class="c" style="fill:#b0b0b0">100</text><text x="707" y="988" class="c" style="fill:#b0b0b0">110</text><text x="767" y="988" class="c" style="fill:#b0b0b0">120</text><text x="826" y="988" class="c" style="fill:#b0b0b0">130</text><text x="885" y="988" class="c" style="fill:#b0b0b0">140</text><text x="945" y="988" class="c" style="fill:#b0b0b0">150</text><text x="1004" y="988" class="c" style="fill:#b0b0b0">160</text><text x="1064" y="988" class="c" style="fill:#b0b0b0">170</text><text x="1123" y="988" class="c" style="fill:#b0b0b0">180</text><text x="1182" y="988" class="c" style="fill:#b0b0b0">190</text><text x="1242" y="988" class="c" style="fill:#b0b0b0">200</text><text x="1301" y="988" class="c" style="fill:#b0b0b0">210</text><text x="1361" y="988" class="c" style="fill:#b0b0b0">220</text><text x="1420" y="988" class="c" style="fill:#b0b0b0">230</text><text x="1480" y="988" class="c" style="fill:#b0b0b0">240</text><text x="1539" y="988" class="c" style="fill:#b0b0b0">250</text>
</g>
<rect x="58" y="990" width="2" height="30" fill="#4772b3"/><rect x="47" y="975" width="24" height="17" rx="4" fill="#4772b3"/><text x="59" y="988" class="c" style="fill:#fff;font-weight:700">1</text>

<rect x="9" y="950" width="31" height="19" rx="3" fill="#262626" stroke="#3c3c3c"/><circle cx="20" cy="959.500" r="6" fill="#e6e6e6"/><path d="M22 954a6 6 0 0 0 0 11l-3-5.500z" fill="#262626"/><use href="#chev" x="34" y="960"/>
<rect x="46" y="950" width="132" height="19" rx="3" fill="#2a2a2a" stroke="#3c3c3c"/><rect x="116" y="950" width="1" height="19" fill="#3c3c3c"/>
<text x="53" y="964" textLength="46" lengthAdjust="spacingAndGlyphs">Playback</text><use href="#chev" x="110" y="960"/><text x="124" y="964" textLength="37" lengthAdjust="spacingAndGlyphs">Keying</text><use href="#chev" x="171" y="960"/>
<text x="187" y="964">View</text><text x="228" y="964" textLength="36" lengthAdjust="spacingAndGlyphs">Marker</text>
<rect x="708" y="950" width="38" height="19" rx="3" fill="#2a2a2a"/><rect x="708" y="950" width="19" height="19" rx="3" fill="#4e4e4e"/><circle cx="717" cy="960" r="4.500" fill="none" stroke="#aaa"/><use href="#chev" x="736" y="960"/>
<rect x="754" y="950" width="117" height="19" rx="3" fill="#545454"/>
<path d="M772 950v19M792 950v19M812 950v19M832 950v19M851 950v19" stroke="#3d3d3d"/>
<path d="M758 955h1.500v9H758zM761 959.500l6-4.500v9z" fill="#e6e6e6"/>
<path d="M777 959.500l3.500-4v8zM781 959.500l3-4.200 3 4.200-3 4.200z" fill="#e6e6e6"/>
<path d="M797 959.500l9-6v12z" fill="#e6e6e6"/><path d="M817 953.500v12l9-6z" fill="#f0f0f0"/>
<path d="M836 959.500l3-4.200 3 4.200-3 4.200zM843 955.500l3.500 4-3.500 4z" fill="#e6e6e6"/>
<path d="M856 955l6 4.500-6 4.500zM864 955h1.500v9H864z" fill="#e6e6e6"/>
<rect x="1318" y="950" width="75" height="19" rx="3" class="f"/><text x="1354" y="964" class="c w">1</text>
<rect x="1398" y="950" width="195" height="19" rx="3" class="f"/><rect x="1398" y="950" width="19" height="19" rx="3" fill="#3f3f3f"/><circle cx="1408" cy="961" r="5" fill="none" stroke="#ddd"/><path d="M1408 958v3l2 1.500M1406 954h4" fill="none" stroke="#ddd"/>
<path d="M1417 950v19M1506 950v19" stroke="#3d3d3d"/>
<text x="1433" y="964">Start</text><text x="1493" y="964" class="r">1</text><text x="1522" y="964">End</text><text x="1579" y="964" class="r">250</text>

<!-- outliner -->
<path d="M1606 50H1909a4 4 0 0 1 4 4V362H1602V54a4 4 0 0 1 4-4z" fill="#282828"/>
<path d="M1606 50H1913V77H1602V54a4 4 0 0 1 4-4z" fill="#2e2e2e"/>
<rect x="1610" y="52" width="32" height="20" rx="3" fill="#262626" stroke="#3c3c3c"/><path d="M1615 56h5v3h-5zM1619 63h7M1619 68h7M1617 59v10h2" fill="none" stroke="#ccc"/><use href="#chev" x="1635" y="62"/>
<rect x="1647" y="52" width="31" height="20" rx="3" fill="#262626" stroke="#3c3c3c"/><rect x="1653" y="58" width="10" height="10" fill="none" stroke="#ccc"/><rect x="1656" y="55" width="10" height="10" fill="#262626" stroke="#ccc"/><path d="M1657 64l4-5 4 5z" fill="#ccc"/><use href="#chev" x="1672" y="62"/>
<rect x="1695" y="52" width="118" height="20" rx="4" fill="#1f1f1f" stroke="#3c3c3c"/><circle cx="1708" cy="59.500" r="4.500" fill="none" stroke="#c8c8c8"/><path d="M1705 63l-5 5" stroke="#c8c8c8"/><text x="1721" y="66" class="dim">Search</text>
<rect x="1855" y="52" width="31" height="20" rx="3" fill="#262626" stroke="#3c3c3c"/><path d="M1859 56h14l-5 7v6l-4-2v-4z" fill="none" stroke="#ccc"/><use href="#chev" x="1880" y="62"/>
<rect x="1893" y="52" width="18" height="20" rx="3" fill="#545454"/><path d="M1897 58h9v10h-9zM1897 62h5" fill="none" stroke="#ddd"/><circle cx="1906" cy="57" r="3" fill="#ddd"/>

<rect x="1603" y="77" width="310" height="20" fill="#282828"/><rect x="1603" y="97" width="310" height="20" fill="#2c2c2c"/><rect x="1603" y="117" width="310" height="19" fill="#282828"/><rect x="1603" y="136" width="310" height="20" fill="#334d80"/><rect x="1603" y="156" width="310" height="20" fill="#282828"/><rect x="1603" y="176" width="310" height="20" fill="#2c2c2c"/><rect x="1603" y="196" width="310" height="20" fill="#282828"/><rect x="1603" y="216" width="310" height="20" fill="#2c2c2c"/>
<rect x="1631" y="121" width="1" height="110" fill="#5a5a5a"/>
<rect x="1625" y="80" width="13" height="3.500" fill="#dcdcdc"/><path d="M1626 85h11v8h-11z" fill="#dcdcdc"/><rect x="1630" y="87" width="3" height="1.400" fill="#282828"/>
<text x="1646" y="91" class="h">Scene Collection</text>
<use href="#chev" x="1631" y="107"/>
<rect x="1642" y="98" width="20" height="18" rx="4" fill="#4e4e4e" stroke="#777"/><rect x="1646" y="101" width="12" height="3" fill="#e0e0e0"/><path d="M1647 105h10v7h-10z" fill="#e0e0e0"/><rect x="1650" y="107" width="4" height="1.400" fill="#4e4e4e"/>
<text x="1666" y="111" class="h">Collection</text>
<path d="M1650 122l3 4-3 4M1650 142l3 4-3 4M1650 162l3 4-3 4M1650 182l3 4-3 4M1650 202l3 4-3 4M1650 222l3 4-3 4" fill="none" stroke="#aaa"/>
<!-- rows -->
<g opacity=".55"><rect x="1665" y="124" width="11" height="8" fill="#cd8549"/><circle cx="1668" cy="121" r="2.500" fill="#cd8549"/><circle cx="1674" cy="121" r="2.500" fill="#cd8549"/><path d="M1676 126l4-2v7l-4-2z" fill="#cd8549"/></g>
<text x="1686" y="131" class="dim">Camera</text>
<rect x="1746" y="117" width="20" height="18" rx="4" fill="#4a4a4a"/><g fill="none" stroke="#0f9c7c" opacity=".8"><rect x="1751" y="126" width="8" height="5"/><circle cx="1753" cy="122" r="2"/><circle cx="1758" cy="122" r="2"/></g>
<rect x="1661" y="138" width="21" height="17" rx="4" fill="#5375aa" stroke="#7b97c3"/><use href="#obj" x="1671.500" y="146"/>
<text x="1686" y="151" style="fill:#f5a623">Crate</text><use href="#mesh" x="1743" y="146" stroke="#18b69d"/>
<g opacity=".6"><circle cx="1672" cy="164" r="5" fill="#cd8549"/><rect x="1669" y="169" width="6" height="3" fill="#cd8549"/></g>
<text x="1686" y="171" class="dim">Light</text><circle cx="1742" cy="165" r="5" fill="none" stroke="#118a72"/><path d="M1742 165v8" stroke="#118a72"/>
<use href="#obj" x="1672" y="185"/><text x="1686" y="191" class="h">Pillar</text><use href="#wr" x="1742" y="186"/><use href="#mesh" x="1762" y="185" stroke="#18b69d"/>
<use href="#obj" x="1672" y="205"/><text x="1686" y="211" class="h">Pillar.001</text><use href="#wr" x="1766" y="206"/><use href="#mesh" x="1786" y="205" stroke="#18b69d"/>
<use href="#obj" x="1672" y="225"/><text x="1686" y="231" class="h">Pillar.002</text><use href="#wr" x="1766" y="226"/><use href="#mesh" x="1786" y="225" stroke="#18b69d"/>
<rect x="1855" y="101" width="10" height="10" rx="1.500" fill="#e4e4e4"/><path d="M1857 106l2 2 4-4" fill="none" stroke="#222" stroke-width="1.300"/>
<use href="#eye" x="1879" y="105"/><use href="#eyeh" x="1879" y="127"/><use href="#eye" x="1879" y="145"/><use href="#eyeh" x="1879" y="167"/><use href="#eye" x="1879" y="185"/><use href="#eye" x="1879" y="205"/><use href="#eye" x="1879" y="225"/>
<use href="#cam" x="1899" y="106"/><use href="#cam" x="1899" y="126"/><use href="#cam" x="1899" y="146"/><use href="#cam" x="1899" y="166"/><use href="#cam" x="1899" y="186"/><use href="#cam" x="1899" y="206"/><use href="#cam" x="1899" y="226"/>

<!-- properties -->
<path d="M1606 363H1913V1020H1602V367a4 4 0 0 1 4-4z" fill="#2e2e2e"/>
<rect x="1602" y="388" width="28" height="632" fill="#1f1f1f"/>
<rect x="1604" y="645" width="26" height="26" rx="3" fill="#2e2e2e"/>
<rect x="1611" y="365" width="31" height="19" rx="3" fill="#262626" stroke="#3c3c3c"/><rect x="1615" y="368" width="14" height="6" rx="2" fill="#262626" stroke="#ddd"/><rect x="1615" y="375" width="14" height="6" rx="2" fill="#ddd"/><use href="#chev" x="1635" y="375"/>
<rect x="1702" y="365" width="117" height="19" rx="4" fill="#1f1f1f" stroke="#3c3c3c"/><circle cx="1715" cy="372" r="4.500" fill="none" stroke="#c8c8c8"/><path d="M1712 375l-5 5" stroke="#c8c8c8"/><text x="1727" y="379" class="dim">Search</text>
<rect x="1892" y="365" width="20" height="19" rx="3" fill="#262626" stroke="#3c3c3c"/><use href="#chev" x="1902" y="375"/>
<!-- prop tabs icons -->
<path d="M1622 404l0 13M1619 403a3 3 0 0 0 6 0" fill="none" stroke="#d0d0d0" stroke-width="2"/><rect x="1610" y="410" width="5" height="7" rx="1" fill="#d0d0d0"/><rect x="1612" y="404" width="1.500" height="5" fill="#d0d0d0"/>
<rect x="1610" y="441" width="14" height="10" fill="none" stroke="#c8c8c8"/><rect x="1612" y="439" width="8" height="2" fill="#c8c8c8"/><path d="M1618 443h5v8h-5z" fill="#c8c8c8"/>
<rect x="1610" y="467" width="14" height="4" fill="#c8c8c8"/><path d="M1612 472h10v9h-10z" fill="#c8c8c8"/><path d="M1615 480l2-4 2 4z" fill="#1f1f1f"/>
<rect x="1610" y="500" width="10" height="8" fill="none" stroke="#b5b5b5"/><rect x="1612" y="497" width="11" height="9" fill="#1f1f1f" stroke="#b5b5b5"/><path d="M1613 505l5-6 4 6z" fill="#b5b5b5"/>
<path d="M1614 525l4 6a4 4 0 1 1-8 0z" fill="#c0c0c0"/><circle cx="1620" cy="533" r="3.500" fill="none" stroke="#c0c0c0"/><circle cx="1622" cy="525" r="1.500" fill="#c0c0c0"/>
<circle cx="1617" cy="558" r="6.500" fill="#a34e57"/><path d="M1611 552l12 12M1623 552l-12 12" stroke="#1f1f1f" stroke-width=".8"/>
<rect x="1610" y="588" width="14" height="3.500" fill="#dcdcdc"/><path d="M1611 593h12v8h-12z" fill="none" stroke="#dcdcdc"/><rect x="1615" y="596" width="4" height="1.300" fill="#dcdcdc"/>
<path d="M1610 627v-3h3M1621 624h3v3M1610 633v3h3M1621 636h3v-3" fill="none" stroke="#c27e45"/><rect x="1613" y="626" width="8" height="8" fill="#c4834a"/>
<path d="M1611 665l6-7c-1-3 2-6 6-6l-3 3 2 2 3-3c0 4-3 7-6 6l-6 7z" fill="#6b9cff"/>
<circle cx="1611" cy="681" r="2.200" fill="#4d78c4"/><circle cx="1623" cy="682" r="1.400" fill="#4d78c4"/><circle cx="1612" cy="691" r="1.500" fill="#4d78c4"/><circle cx="1622" cy="691" r="2" fill="#4d78c4"/><path d="M1611 681h12M1611 681l1 10M1611 681l11 10" stroke="#4d78c4"/>
<circle cx="1617" cy="714" r="6.500" fill="none" stroke="#4d78c4"/><circle cx="1617" cy="714" r="3" fill="#4d78c4"/><circle cx="1622" cy="709" r="1.700" fill="#4d78c4"/>
<ellipse cx="1617" cy="742" rx="7" ry="5" transform="rotate(-40 1617 742)" fill="none" stroke="#4d78c4" stroke-width="1.400"/><circle cx="1615" cy="744" r="2" fill="none" stroke="#4d78c4"/>
<use href="#mesh" x="1617" y="770" stroke="#18b69d"/>
<circle cx="1617" cy="797.500" r="7" fill="#a34e57"/><path d="M1617 790.500v7h7a7 7 0 0 1-7-7zM1611 801l6-3.500 6 3.500a7 7 0 0 1-12 0z" fill="#1f1f1f"/>
<rect x="1610" y="827" width="14" height="14" fill="#a34e57"/><path d="M1610 827h3.500v3.500h-3.500zM1617 827h3.500v3.500h-3.500zM1613.500 830.500h3.500v3.500h-3.500zM1620.500 830.500h3.500v3.500h-3.500zM1610 834h3.500v3.500h-3.500zM1617 834h3.500v3.500h-3.500zM1613.500 837.500h3.500v3.500h-3.500zM1620.500 837.500h3.500v3.500h-3.500z" fill="#242424"/>
<path d="M1641 403v-3h3M1652 400h3v3M1641 409v3h3M1652 412h3v-3" fill="none" stroke="#c8c8c8"/><rect x="1644" y="402" width="8" height="8" fill="#e8e8e8"/>
<text x="1664" y="410">Crate</text>
<path d="M1897 412l3-4-2-2 1-1 4 0 3-3 1 1 2-2" fill="none" stroke="#8a8a8a"/><path d="M1905 399l5 5-3 1-2 3-4-4z" fill="none" stroke="#8a8a8a"/>
<rect x="1639" y="433" width="272" height="18" rx="3" class="f"/><path d="M1646 441.500h9M1650.500 437v9" stroke="#e0e0e0" fill="none"/><text x="1784" y="446" class="c w">Add Modifier</text>

<!-- status bar -->
<g clip-path="url(#bot)">
<rect x="12" y="1023" width="8" height="14" rx="3.500" fill="none" stroke="#bbb"/><rect x="12.500" y="1023.500" width="3.500" height="6" fill="#bbb"/>
<text x="30" y="1035" style="fill:#a8a8a8">Select</text>
<rect x="224" y="1023" width="8" height="14" rx="3.500" fill="none" stroke="#bbb"/><rect x="227" y="1024" width="2" height="5" fill="#bbb"/>
<text x="240" y="1035" style="fill:#a8a8a8">Rotate View</text>
<rect x="435" y="1023" width="8" height="14" rx="3.500" fill="none" stroke="#bbb"/><rect x="439" y="1023.500" width="3.500" height="6" fill="#bbb"/>
<text x="451" y="1035" style="fill:#a8a8a8">Object</text>
<text x="1882" y="1035" style="fill:#8a8a8a">4.2.0</text>
</g>
</svg>
</body></html>
